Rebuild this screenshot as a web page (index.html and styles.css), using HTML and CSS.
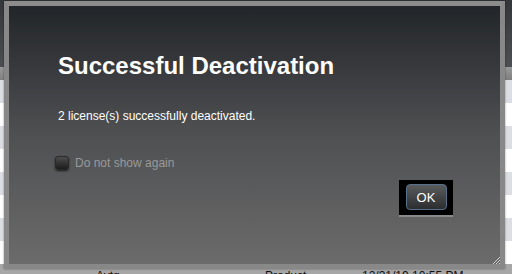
FILE: index.html
```html
<!DOCTYPE html>
<html lang="en">
<head>
    <meta charset="UTF-8">
    <title>Successful Deactivation</title>
    <link rel="stylesheet" href="styles.css">
</head>
<body>
    <div class="page">
        <div class="header"></div>
        <div class="toolbar"></div>
        <div class="rows">
            <div class="row"></div>
            <div class="row"></div>
            <div class="row"></div>
            <div class="row"></div>
            <div class="row"></div>
            <div class="row"></div>
            <div class="row"></div>
            <div class="row"></div>
            <div class="row data">
                <span class="c1">Avtg</span>
                <span class="c2">Product</span>
                <span class="c3">12/31/19 10:55 PM</span>
            </div>
        </div>
    </div>

    <!-- Modal dialog -->
    <div class="dialog">
        <div class="dialog-body">
            <h1>Successful Deactivation</h1>
            <p class="message">2 license(s) successfully deactivated.</p>
            <label class="check">
                <span class="box"></span>
                Do not show again
            </label>
            <div class="actions">
                <div class="btn-wrap">
                    <button class="btn">OK</button>
                </div>
            </div>
        </div>
        <svg class="grip" width="8" height="8" viewBox="0 0 8 8">
            <path d="M8 1 L1 8 M8 4 L4 8 M8 7 L7 8" stroke="#cfcfcf" stroke-width="1"/>
        </svg>
    </div>
</body>
</html>
```

FILE: styles.css
```css
body {
    margin: 0;
    font-family: "Liberation Sans", Arial, sans-serif;
    background-color: #f2f3f6;
    overflow: hidden;
}
.page {
    width: 512px;
    height: 274px;
}
.header {
    height: 67px;
    background: linear-gradient(#333538, #4e4f52);
}
.toolbar {
    height: 13px;
    background: linear-gradient(#9a9a9a, #7f7f7f);
}
.row {
    height: 23px;
    background-color: #ffffff;
    font-size: 12px;
    color: #111;
    display: flex;
    align-items: flex-start;
}
.row:nth-child(odd) {
    background-color: #dcdee4;
}
.row.data {
    padding-top: 5px;
    box-sizing: border-box;
    background-color: #a6a6a6;
}
.c1 { margin-left: 96px; width: 169px; }
.c2 { width: 97px; }

.dialog {
    position: absolute;
    left: 4px;
    top: 1px;
    width: 501px;
    height: 268px;
    box-sizing: border-box;
    border: 5px solid #888888;
    border-top-color: #8c8c8c;
    box-shadow: 0 0 2px rgba(0, 0, 0, 0.4);
}
.dialog-body {
    height: 100%;
    box-sizing: border-box;
    padding: 46px 47px 0 49px;
    background: linear-gradient(#222529, #4f5052 50%, #6b6b6b);
    display: flex;
    flex-direction: column;
}
.dialog h1 {
    margin: 0;
    font-size: 24px;
    line-height: 28px;
    font-weight: bold;
    color: #ffffff;
}
.message {
    margin: 28px 0 0;
    font-size: 12px;
    line-height: 16px;
    color: #ffffff;
}
.check {
    margin: 31px 0 0 -3px;
    display: flex;
    align-items: center;
    gap: 6px;
    font-size: 12px;
    line-height: 16px;
    color: #9a9a9a;
}
.box {
    width: 14px;
    height: 14px;
    box-sizing: border-box;
    border: 1px solid #2a2a2a;
    border-radius: 3px;
    background: linear-gradient(#4c4c4c, #1c1c1c);
    box-shadow: 0 1px 2px rgba(0, 0, 0, 0.7);
}
.actions {
    margin-top: 9px;
    display: flex;
    justify-content: flex-end;
}
.btn-wrap {
    width: 54px;
    height: 37px;
    box-sizing: border-box;
    background-color: #000000;
    border-bottom: 2px solid #8a8a8a;
    display: flex;
    align-items: center;
    justify-content: center;
    padding-bottom: 1px;
}
.btn {
    width: 41px;
    height: 26px;
    border: 1px solid #56708c;
    border-radius: 4px;
    background: linear-gradient(#5a5b5d, #2c2d2f);
    color: #ffffff;
    font-family: "Liberation Sans", Arial, sans-serif;
    font-size: 13px;
    padding: 0;
}
.grip {
    position: absolute;
    right: 0;
    bottom: 0;
}
```
